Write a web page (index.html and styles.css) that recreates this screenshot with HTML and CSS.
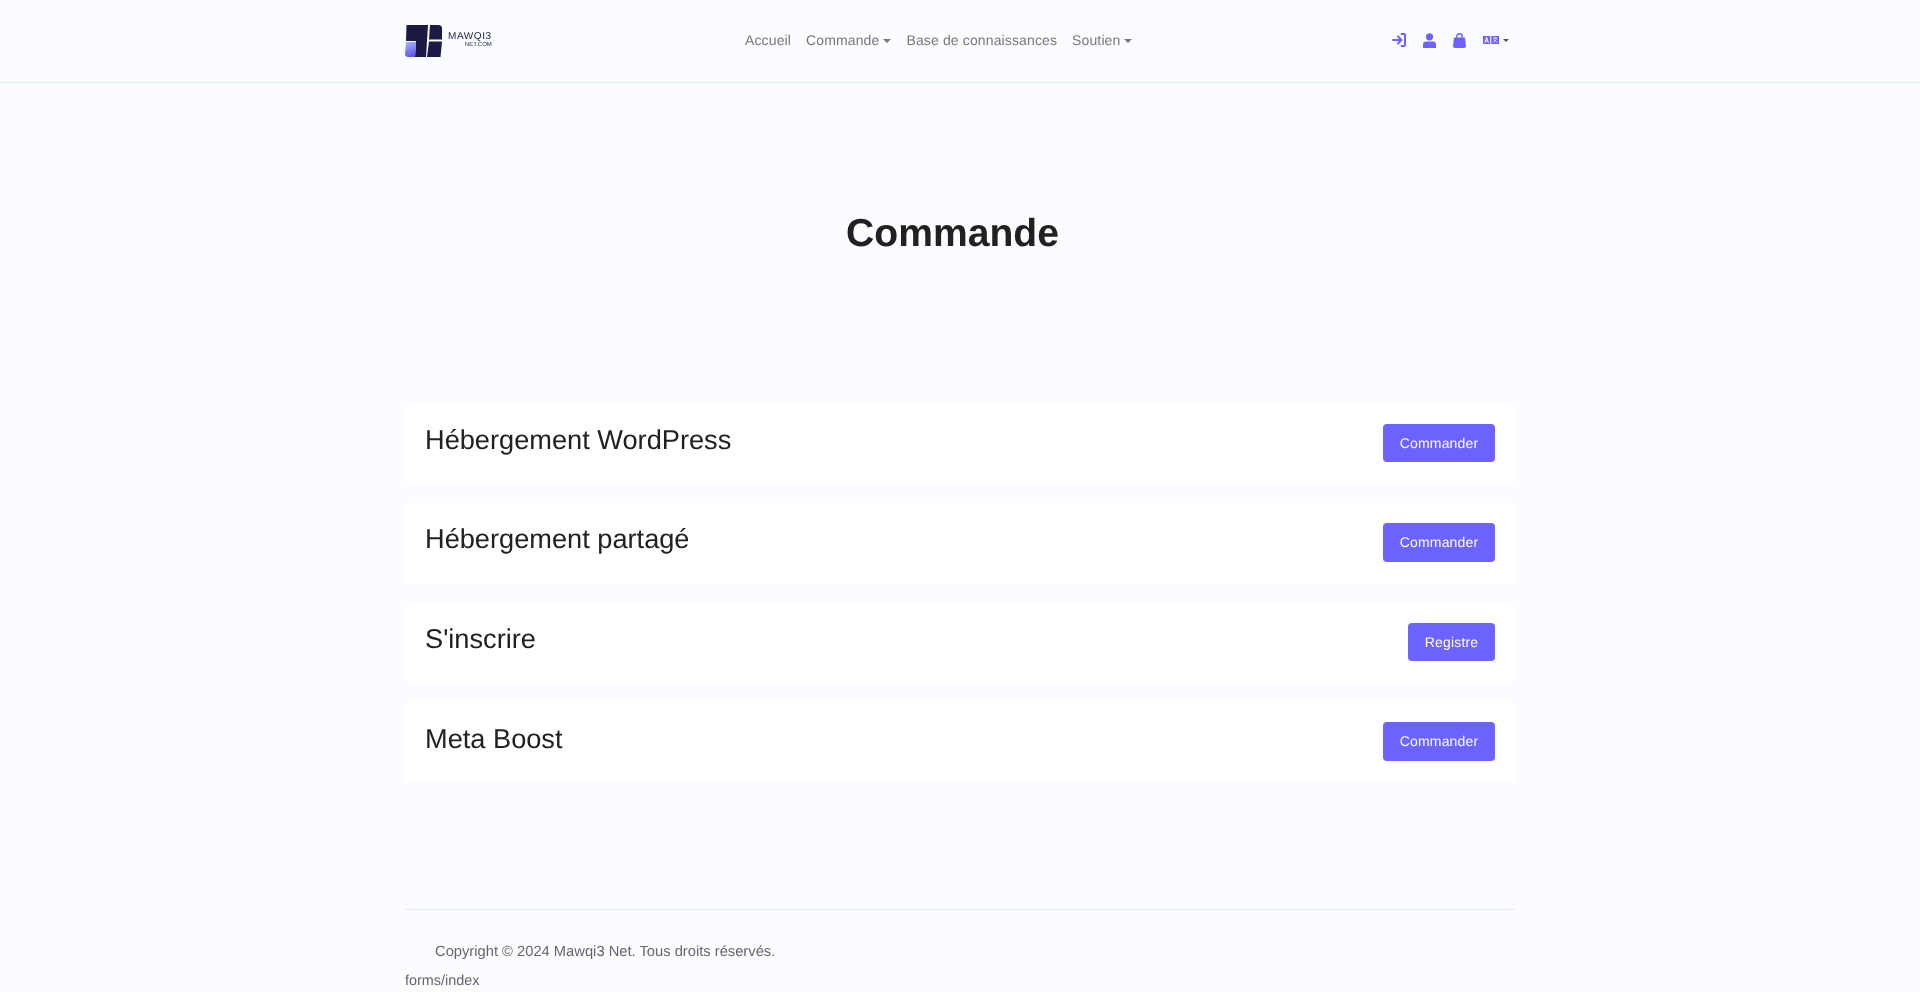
FILE: index.html
```html
<!DOCTYPE html>
<html lang="fr">
<head>
<meta charset="utf-8">
<title>Commande</title>
<link rel="stylesheet" href="styles.css">
</head>
<body>
<header class="topbar">
  <div class="container bar">
    <a class="logo" href="#">
      <svg class="logo-mark" width="37" height="32" viewBox="0 0 37 32">
        <defs><linearGradient id="lg" x1="0" y1="0" x2="0.3" y2="1"><stop offset="0" stop-color="#aab6fb"/><stop offset="1" stop-color="#5f5cf0"/></linearGradient></defs>
        <path d="M1.500 0H23L21 32H10L11 16H1Z" fill="#1b1a45"/>
        <path d="M25 0H33.500Q37 0 37 3.500V14.500H24Z" fill="#1b1a45"/>
        <path d="M24 16.500H37L35.500 32H22Z" fill="#1b1a45"/>
        <path d="M1 17H11L10 32H3Q0 32 0 29Z" fill="url(#lg)"/>
      </svg>
      <span class="logo-text"><span class="logo-name">MAWQI3</span><span class="logo-sub">NET.COM</span></span>
    </a>
    <nav class="menu">
      <a href="#">Accueil</a>
      <a href="#" class="caret">Commande</a>
      <a href="#">Base de connaissances</a>
      <a href="#" class="caret">Soutien</a>
    </nav>
    <div class="tools">
      <svg width="14" height="14" viewBox="0 0 14 14" fill="none" stroke="#6c63ff" stroke-width="2" stroke-linecap="round" stroke-linejoin="round"><path d="M1 7H9M6 3.500L9.500 7L6 10.500"/><path d="M9.500 1H12Q13 1 13 2V12Q13 13 12 13H9.500"/></svg>
      <svg width="13" height="15" viewBox="0 0 13 15" fill="#6c63ff"><circle cx="6.500" cy="3.800" r="3.600"/><path d="M0 15V11.500Q0 8.500 3 8.500H10Q13 8.500 13 11.500V15Z"/></svg>
      <svg width="13" height="15" viewBox="0 0 13 15"><path d="M1 4.500H12L13 13Q13 15 11 15H2Q0 15 0 13Z" fill="#6c63ff"/><path d="M3.800 6.500V3.200Q3.800 0.800 6.500 0.800Q9.200 0.800 9.200 3.200V6.500" fill="none" stroke="#6c63ff" stroke-width="1.400"/></svg>
      <span class="lang caret">
        <svg width="16" height="8" viewBox="0 0 16 8"><rect x="0" y="0" width="7.200" height="8" fill="#6c63ff"/><rect x="8.300" y="0" width="7.700" height="8" fill="#6c63ff"/><path d="M1.800 6.700L3.600 1.300L5.400 6.700M2.500 5H4.700" fill="none" stroke="#fff" stroke-width="1"/><path d="M10 2H14.300M12.100 1V2.500M10.500 6.500L13.500 3M11 3.500L14 6.500" fill="none" stroke="#fff" stroke-width="0.800"/></svg>
      </span>
    </div>
  </div>
</header>

<main class="container">
  <h1 class="page-title">Commande</h1>
  <section class="list">
    <article class="card"><h2>Hébergement WordPress</h2><a class="btn" href="#">Commander</a></article>
    <article class="card"><h2>Hébergement partagé</h2><a class="btn" href="#">Commander</a></article>
    <article class="card"><h2>S'inscrire</h2><a class="btn" href="#">Registre</a></article>
    <article class="card"><h2>Meta Boost</h2><a class="btn" href="#">Commander</a></article>
  </section>
</main>

<footer class="container footer">
  <p class="copy">Copyright © 2024 Mawqi3 Net. Tous droits réservés.</p>
  <p class="route">forms/index</p>
</footer>
</body>
</html>
```

FILE: styles.css
```css
* { box-sizing: border-box; }
html, body { margin: 0; padding: 0; }
body {
  background: #fbfcff;
  color: #212121;
  font-family: "Liberation Sans", Arial, sans-serif;
  font-size: 14px;
  text-rendering: geometricPrecision;
  height: 992px;
  overflow: hidden;
}
a { text-decoration: none; color: inherit; }
.container { width: 1110px; margin: 0 auto; will-change: transform; }
.topbar { height: 83px; border-bottom: 1px solid #e9ecef; }
.bar { height: 82px; padding-bottom: 2px; display: flex; align-items: center; position: relative; }
.logo { display: flex; align-items: center; gap: 6px; width: 340px; margin-top: 2px; }
.logo-mark { display: block; }
.logo-text { display: flex; flex-direction: column; align-items: flex-end; color: #1b1a45; line-height: 1; margin-top: -2px; }
.logo-name { font-size: 10px; letter-spacing: 0.6px; }
.logo-sub { font-size: 6px; }
.menu { display: flex; gap: 15px; color: #777; font-size: 14px; letter-spacing: 0.13px; }
.caret::after {
  content: "";
  display: inline-block;
  margin-left: 4px;
  vertical-align: 2px;
  border-top: 4px solid currentColor;
  border-left: 4px solid transparent;
  border-right: 4px solid transparent;
}
.tools { margin-left: auto; display: flex; align-items: center; gap: 17px; padding-right: 6px; }
.tools svg { display: block; }
.lang { display: flex; align-items: center; color: #555; }
.lang.caret::after { margin-left: 4px; vertical-align: 0; border-top-width: 3px; border-left-width: 3px; border-right-width: 3px; }
.page-title { margin: 0; height: 320.400px; padding-top: 127px; padding-right: 15px; text-align: center; font-size: 39.100px; line-height: 48px; font-weight: 700; }
.list { display: flex; flex-direction: column; gap: 20px; }
.card { height: 79.600px; background: #fff; border-radius: 4px; padding: 20.300px 20px 20px; display: flex; justify-content: space-between; align-items: flex-start; }
.card h2 { margin: -0.900px 0 0; font-size: 27.200px; line-height: 34px; font-weight: 400; }
.btn { display: block; height: 38.400px; line-height: 38px; padding: 0 16.800px 0 17px; background: #6c63ff; color: #fff; border-radius: 4px; font-size: 14px; letter-spacing: 0.15px; }
.footer { margin-top: 127px; border-top: 1px solid #e9ecef; color: #666; }
.copy { margin: 32px 0 0 30px; font-size: 14.720px; line-height: 20px; }
.route { margin: 9px 0 0; font-size: 14.400px; line-height: 20px; }
```
